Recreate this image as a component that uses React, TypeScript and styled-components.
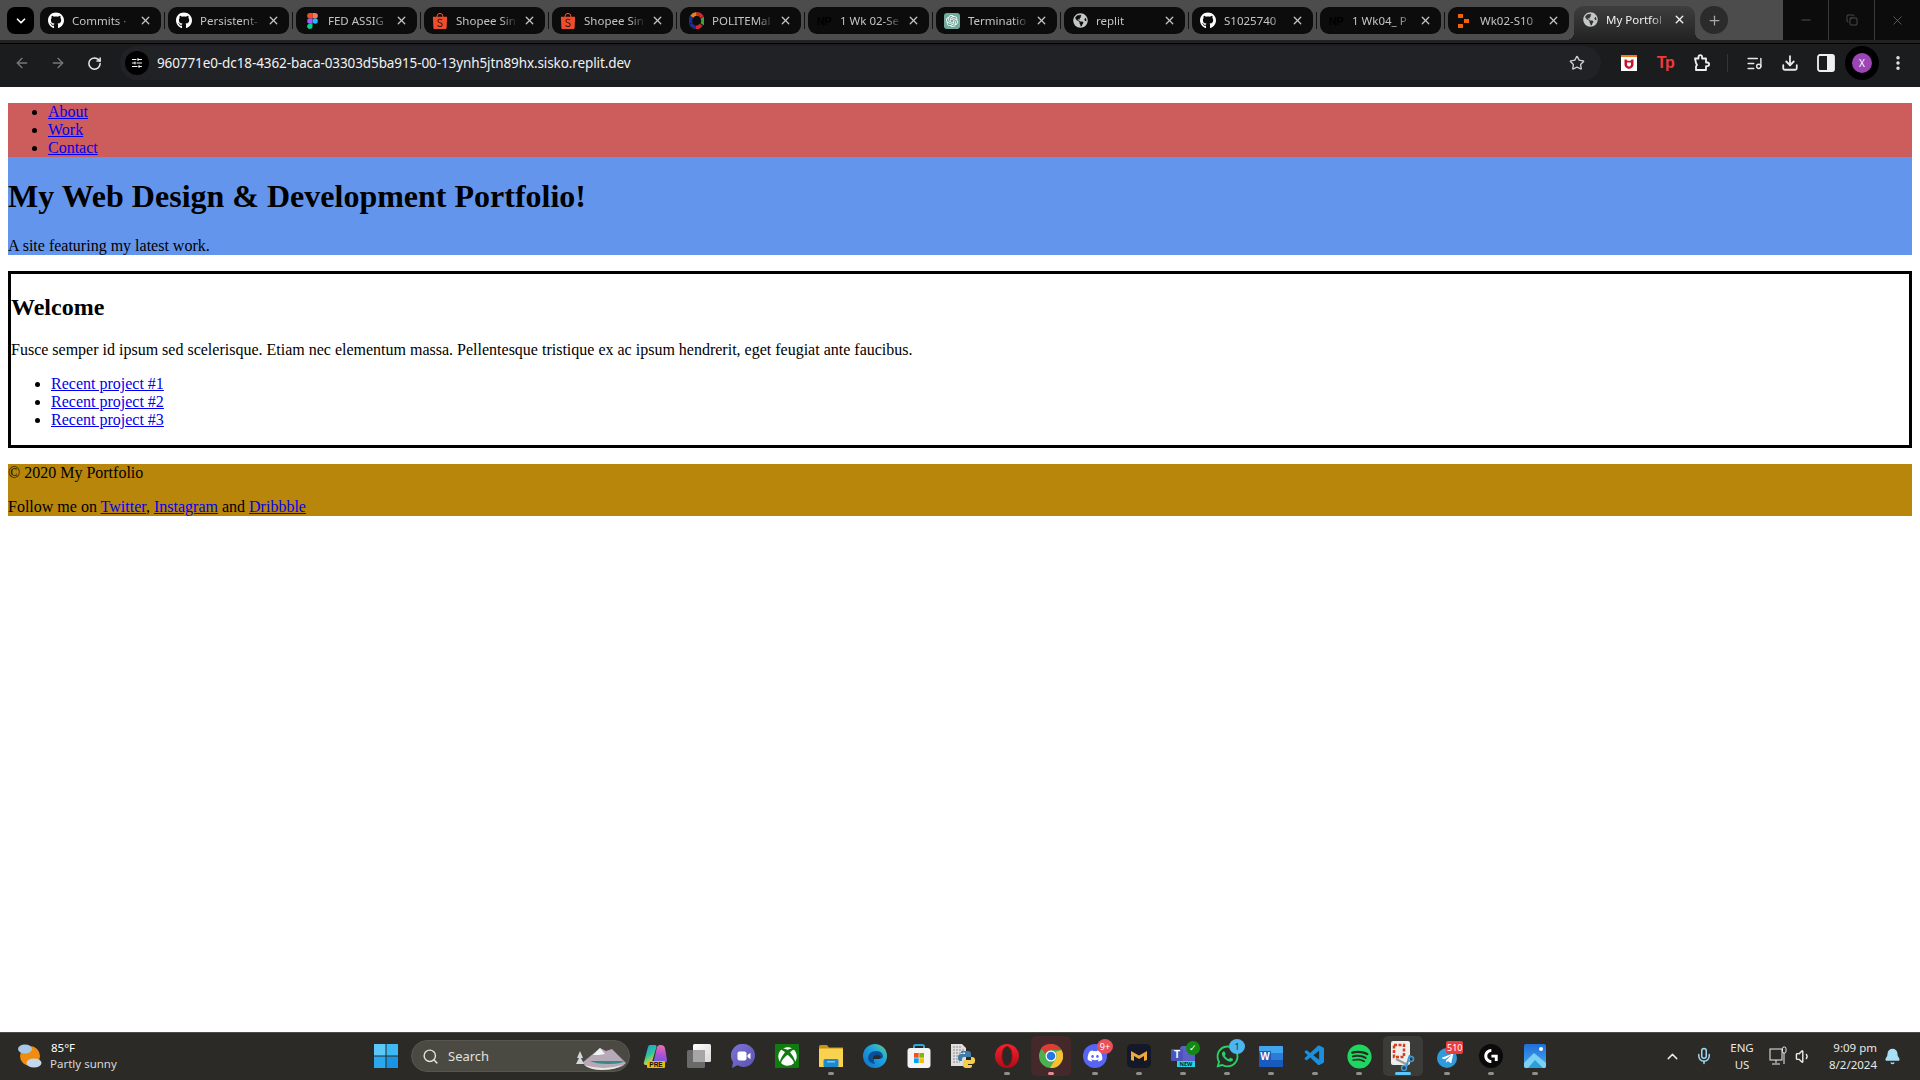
import React from "react";
import styled, { createGlobalStyle } from "styled-components";
import {
  ArrowLeft,
  ArrowRight,
  Bell,
  ChevronDown,
  ChevronUp,
  Copy,
  Download,
  EllipsisVertical,
  ListMusic,
  Mic,
  Minus,
  Plus,
  RotateCw,
  Search,
  SlidersHorizontal,
  Star,
  Volume1,
  X,
} from "lucide-react";
import {
  FaDiscord,
  FaGithub,
  FaGlobeAmericas,
  FaSpotify,
  FaTelegramPlane,
  FaWhatsapp,
  FaXbox,
} from "react-icons/fa";
import { SiLogitechg, SiOpenai, SiShopee } from "react-icons/si";
import { VscVscode } from "react-icons/vsc";

const GlobalStyle = createGlobalStyle`
  html, body {
    margin: 0;
    padding: 0;
    height: 100%;
    overflow: hidden;
  }
`;

const Screen = styled.div`
  height: 100vh;
  display: flex;
  flex-direction: column;
  background: #fff;
  overflow: hidden;
`;

/* browser chrome */
const TabStrip = styled.div`
  height: 40px;
  flex: none;
  display: flex;
  background: #4c4c4c;
  font-family: "Noto Sans", "Liberation Sans", sans-serif;
  border-bottom: 3px solid #222;
  box-sizing: content-box;
`;

const TabMenu = styled.div`
  width: 27px;
  height: 27px;
  margin: 7px 6px 0 7px;
  flex: none;
  border-radius: 8px;
  background: #000;
  color: #fff;
  display: flex;
  align-items: center;
  justify-content: center;
`;

const Tab = styled.div<{ $active?: boolean }>`
  position: relative;
  width: 121px;
  height: ${(p) => (p.$active ? "34px" : "27px")};
  margin-top: ${(p) => (p.$active ? "6px" : "7px")};
  flex: none;
  display: flex;
  align-items: center;
  padding: ${(p) => (p.$active ? "0 0 7px 8px" : "0 0 0 8px")};
  box-sizing: border-box;
  border-radius: ${(p) => (p.$active ? "9px 9px 0 0" : "9px")};
  background: ${(p) => (p.$active ? "linear-gradient(#3e3e3e, #232323)" : "#0c0c0c")};
  color: ${(p) => (p.$active ? "#f0f0f0" : "#c4c4c4")};
  ${(p) =>
    p.$active &&
    `
    &::before, &::after {
      content: "";
      position: absolute;
      bottom: 0;
      width: 8px;
      height: 8px;
    }
    &::before {
      left: -8px;
      background: radial-gradient(circle at 0 0, transparent 8px, #232323 8px);
    }
    &::after {
      right: -8px;
      background: radial-gradient(circle at 100% 0, transparent 8px, #232323 8px);
    }
  `}
`;

const TabSep = styled.div<{ $hidden?: boolean }>`
  width: 1px;
  height: 17px;
  margin: ${(p) => (p.$hidden ? "12px 2px 0" : "12px 3px 0")};
  flex: none;
  background: ${(p) => (p.$hidden ? "transparent" : "#111")};
`;

const Fav = styled.span`
  width: 16px;
  height: 16px;
  flex: none;
  display: flex;
  align-items: center;
  justify-content: center;
`;

const TabTitle = styled.span`
  width: 63px;
  margin-left: 8px;
  font-size: 11.5px;
  white-space: nowrap;
  overflow: hidden;
  mask-image: linear-gradient(90deg, #000 72%, transparent 98%);
`;

const TabClose = styled.span`
  display: flex;
  margin-left: 4px;
`;

const NewTab = styled.div`
  width: 28px;
  height: 28px;
  margin: 6px 0 0 5px;
  flex: none;
  border-radius: 50%;
  background: #2b2b2b;
  color: #a8a8a8;
  display: flex;
  align-items: center;
  justify-content: center;
`;

const WindowControls = styled.div`
  margin-left: auto;
  width: 137px;
  display: flex;
  background: #0c0c0c;
`;

const WindowButton = styled.div`
  flex: 1;
  display: flex;
  align-items: center;
  justify-content: center;
  color: #858585;
  & + & {
    border-left: 1px solid #3a3a3a;
  }
`;

const Toolbar = styled.div`
  height: 44px;
  flex: none;
  display: flex;
  align-items: flex-start;
  box-sizing: border-box;
  padding: 2px 4px 0;
  border-top: 1px solid #000;
  background: #1b1c1e;
  color: #e4e4e4;
`;

const ToolButton = styled.div<{ $dim?: boolean }>`
  width: 36px;
  height: 34px;
  flex: none;
  display: flex;
  align-items: center;
  justify-content: center;
  color: ${(p) => (p.$dim ? "#76777a" : "#e8e8e8")};
`;

const Omnibox = styled.div`
  flex: 1;
  height: 34px;
  margin: 0 10px 0 8px;
  display: flex;
  align-items: center;
  padding: 0 16px 0 5px;
  border-radius: 17px;
  background: #212226;
`;

const SiteInfo = styled.span`
  width: 24px;
  height: 24px;
  border-radius: 50%;
  background: #000;
  color: #fff;
  display: flex;
  align-items: center;
  justify-content: center;
`;

const Url = styled.span`
  flex: 1;
  margin-left: 8px;
  color: #f2f2f2;
  font-family: "Noto Sans", "Liberation Sans", sans-serif;
  font-size: 13.5px;
  letter-spacing: -0.1px;
  white-space: nowrap;
`;

const ToolDivider = styled.div`
  width: 1px;
  height: 18px;
  margin: 8px 8px 0;
  flex: none;
  background: #333437;
`;

const AvatarRing = styled.div`
  width: 34px;
  height: 34px;
  border-radius: 50%;
  background: #000;
  display: flex;
  align-items: center;
  justify-content: center;
`;

const AvatarDot = styled.div`
  width: 20px;
  height: 20px;
  border-radius: 50%;
  background: #9c45b5;
  color: #fff;
  font-family: "Noto Sans", sans-serif;
  font-size: 10px;
  display: flex;
  align-items: center;
  justify-content: center;
`;

const ExtBadge = styled.span`
  color: #ef3a3a;
  font-family: "Liberation Sans", sans-serif;
  font-size: 16px;
  font-weight: 700;
  letter-spacing: -1.5px;
`;

/* the page itself */
const Page = styled.div`
  flex: 1;
  min-height: 0;
  padding: 16px 8px 0;
  font-family: "Liberation Serif", "Times New Roman", serif;
  font-size: 16px;
  color: #000;
  background: #fff;
  overflow: hidden;
  a {
    color: #00e;
  }
  p {
    margin: 16px 0;
  }
`;

const NavBar = styled.nav`
  background: #cd5c5c;
`;

const PageList = styled.ul<{ $flush?: boolean }>`
  margin: ${(p) => (p.$flush ? "0" : "16px 0")};
  padding-left: 40px;
`;

const Hero = styled.header`
  display: flow-root;
  background: #6495ed;
  h1 {
    margin: 21.44px 0;
    font-size: 32px;
  }
  p {
    margin: 0;
  }
`;

const Welcome = styled.section`
  display: flow-root;
  margin: 16px 0;
  border: 3px solid #000;
  h2 {
    margin: 19.92px 0;
    font-size: 24px;
  }
`;

const PageFooter = styled.footer`
  display: flow-root;
  background: #b8860b;
  p:first-child {
    margin-top: 0;
  }
  p:last-child {
    margin-bottom: 0;
  }
`;

/* windows taskbar */
const Taskbar = styled.div`
  height: 48px;
  flex: none;
  display: flex;
  align-items: center;
  box-sizing: border-box;
  padding-bottom: 1px;
  border-top: 1px solid #4a4a46;
  background: #2b2a26;
  color: #fff;
  font-family: "Noto Sans", "Liberation Sans", sans-serif;
`;

const Weather = styled.div`
  width: 374px;
  flex: none;
  box-sizing: border-box;
  padding-left: 18px;
  display: flex;
  align-items: center;
  gap: 8px;
`;

const WeatherText = styled.div`
  font-size: 11.5px;
  line-height: 16px;
  color: #d9d9d6;
  b {
    display: block;
    margin-left: 1px;
    color: #fff;
    font-weight: 400;
  }
`;

const StartButton = styled.div`
  width: 24px;
  height: 24px;
  flex: none;
  margin-right: 13px;
`;

const SearchPill = styled.div`
  width: 219px;
  height: 32px;
  flex: none;
  margin-right: 3px;
  box-sizing: border-box;
  padding: 0 3px 0 10px;
  display: flex;
  align-items: center;
  gap: 9px;
  border-radius: 16px;
  background: #4a4942;
  border: 1px solid #565550;
  font-size: 13px;
  color: #e2e2dd;
  span {
    flex: 1;
  }
`;

const AppRow = styled.div`
  display: flex;
  flex: none;
`;

const AppCell = styled.div<{ $state?: "recent" | "focus" }>`
  position: relative;
  width: 44px;
  height: 40px;
  display: flex;
  align-items: center;
  justify-content: center;
  box-sizing: border-box;
  &::before {
    content: "";
    position: absolute;
    inset: 0 2px;
    border-radius: 5px;
    background: ${(p) =>
      p.$state === "recent" ? "#45292a" : p.$state === "focus" ? "#3b3b38" : "transparent"};
  }
  > * {
    position: relative;
  }
`;

const RunDot = styled.i<{ $color?: string; $wide?: boolean }>`
  position: absolute;
  left: 50%;
  bottom: 1px;
  width: ${(p) => (p.$wide ? "16px" : "6px")};
  height: 3px;
  margin-left: ${(p) => (p.$wide ? "-8px" : "-3px")};
  border-radius: 2px;
  background: ${(p) => p.$color || "#8f8f8c"};
`;

const CountBadge = styled.b<{ $bg: string; $square?: boolean; $ink?: string }>`
  position: absolute;
  top: ${(p) => (p.$square ? "5px" : "3px")};
  left: ${(p) => (p.$square ? "21px" : "24px")};
  min-width: 14px;
  height: ${(p) => (p.$square ? "13px" : "15px")};
  padding: 0 1px;
  border-radius: ${(p) => (p.$square ? "2px" : "50%")};
  background: ${(p) => p.$bg};
  color: ${(p) => p.$ink || "#fff"};
  font-size: 9px;
  font-weight: 400;
  line-height: ${(p) => (p.$square ? "13px" : "15px")};
  text-align: center;
`;

const Tray = styled.div`
  margin-left: auto;
  padding-right: 13px;
  display: flex;
  align-items: center;
  color: #e8e8e6;
`;

const TrayCell = styled.div<{ $w: number }>`
  width: ${(p) => p.$w}px;
  display: flex;
  align-items: center;
  justify-content: center;
`;

const Lang = styled.div`
  font-size: 11.5px;
  line-height: 17px;
  text-align: center;
`;

const Clock = styled.div`
  width: 64px;
  font-size: 11.5px;
  line-height: 17px;
  text-align: right;
  white-space: nowrap;
`;

/* small drawings */
const FigmaIcon = () => (
  <svg width="11" height="16" viewBox="0 0 12 18">
    <circle cx="9" cy="9" r="3" fill="#1abcfe" />
    <path d="M3 12h3v3a3 3 0 1 1-3-3z" fill="#0acf83" />
    <path d="M3 6h3v6H3a3 3 0 0 1 0-6z" fill="#a259ff" />
    <path d="M3 0h3v6H3a3 3 0 0 1 0-6z" fill="#f24e1e" />
    <path d="M6 0h3a3 3 0 0 1 0 6H6z" fill="#ff7262" />
  </svg>
);

const PoliteIcon = () => (
  <svg width="15" height="17" viewBox="0 0 16 18" fill="none" strokeWidth="4">
    <path d="M8 2a7 7 0 0 1 6 3.5" stroke="#d9232e" />
    <path d="M14 6a7 7 0 0 1 0 7" stroke="#3aa537" />
    <path d="M13 13.500a7 7 0 0 1-6 3" stroke="#d9232e" />
    <path d="M7 16.500a7 7 0 0 1-5-4" stroke="#1b2f8f" />
    <path d="M2 12a7 7 0 0 1 1-7" stroke="#1b2f8f" />
    <path d="M3 5a7 7 0 0 1 5-3" stroke="#e8801a" />
  </svg>
);

const NpMark = styled.span`
  color: #000;
  font-family: "Liberation Sans", sans-serif;
  font-size: 11px;
  font-weight: 700;
  letter-spacing: -0.5px;
`;

const GptTile = styled.span`
  width: 16px;
  height: 16px;
  border-radius: 3px;
  background: #74aa9c;
  color: #fff;
  display: flex;
  align-items: center;
  justify-content: center;
`;

const BlocksIcon = () => (
  <svg width="12" height="14" viewBox="0 0 12 14" fill="#f26207">
    <rect x="0" y="0" width="5" height="4" />
    <rect x="6" y="5" width="5" height="4" />
    <rect x="0" y="10" width="5" height="4" />
  </svg>
);

const OptIcon = () => (
  <svg width="16" height="16" viewBox="0 0 16 16">
    <rect width="16" height="16" fill="#fff" />
    <rect width="16" height="2" fill="#f0781e" />
    <path d="M3.500 4.500h2l1 1.200h3l1-1.200h2v5q0 3-4.500 4.500-4.500-1.500-4.500-4.500z" fill="#c8142e" />
    <path d="M6 7.500h4v2q0 1.500-2 2.200-2-.7-2-2.200z" fill="#fff" />
  </svg>
);

const PuzzleIcon = () => (
  <svg width="18" height="18" viewBox="0 0 18 18" fill="none" stroke="#f0f0f0" strokeWidth="1.800">
    <path
      d="M3 4.500h3.500V3a1.800 1.800 0 0 1 3.600 0v1.500H14v4h1.300a1.800 1.800 0 0 1 0 3.600H14V16H4v-3.500l1-1.500-1-2z"
      strokeLinejoin="round"
    />
  </svg>
);

const PanelIcon = () => (
  <svg width="18" height="18" viewBox="0 0 18 18">
    <rect x="1" y="1" width="16" height="16" rx="2" fill="none" stroke="#f0f0f0" strokeWidth="1.800" />
    <rect x="10" y="1" width="7" height="16" fill="#f0f0f0" />
  </svg>
);

const WeatherIcon = () => (
  <svg width="24" height="28" viewBox="0 0 24 28">
    <circle cx="12" cy="14" r="10" fill="#f08c10" />
    <ellipse cx="7" cy="7" rx="7" ry="4.500" fill="#a8c8e8" />
    <ellipse cx="16" cy="21" rx="7.500" ry="4.500" fill="#c4d8ec" />
  </svg>
);

const StartIcon = () => (
  <svg width="24" height="24" viewBox="0 0 24 24">
    <rect x="0" y="0" width="11.500" height="11.500" fill="#5cc8fa" />
    <rect x="12.500" y="0" width="11.500" height="11.500" fill="#3db8f5" />
    <rect x="0" y="12.500" width="11.500" height="11.500" fill="#28a8ee" />
    <rect x="12.500" y="12.500" width="11.500" height="11.500" fill="#1a94e2" />
  </svg>
);

const SearchArt = () => (
  <svg width="50" height="30" viewBox="0 0 50 30">
    <path d="M6 22L24 7l6 3 6-2 14 14q-4 6-20 6-18 0-24-6z" fill="#b7a9b5" />
    <path d="M24 7l5 6-6 1-6 0z" fill="#f0f2f6" />
    <path d="M14 20h34q-2 3-16 3-12 0-18-3z" fill="#2f8c8a" />
    <path d="M8 24q20 6 38 0-6 5-20 5-12 0-18-5z" fill="#e8e8e4" />
    <path d="M4 10l3 7h-2l3 6H0l3-6H1z" fill="#cfd8dc" />
  </svg>
);

const CopilotIcon = () => (
  <svg width="24" height="22" viewBox="0 0 24 22">
    <defs>
      <linearGradient id="copA" x1="0" y1="0" x2="0.4" y2="1">
        <stop offset="0" stopColor="#1f9ae8" />
        <stop offset="0.55" stopColor="#2fc29a" />
        <stop offset="1" stopColor="#f0d23c" />
      </linearGradient>
      <linearGradient id="copB" x1="0.6" y1="0" x2="0.5" y2="1">
        <stop offset="0" stopColor="#e870b0" />
        <stop offset="0.5" stopColor="#a84fd8" />
        <stop offset="1" stopColor="#3d6fe0" />
      </linearGradient>
    </defs>
    <path d="M7 0h5q2 0 1.500 2L9 17q-1 3-4 3H3q-3 0-2-3L5 2q.5-2 2-2z" fill="url(#copA)" />
    <path d="M14 2q1-2 3-2h1q3 0 4 3l2 12q0 3-3 3l-9 3q-3 0-2-2z" fill="url(#copB)" />
  </svg>
);

const PreTag = styled.span`
  position: absolute;
  left: 14px;
  top: 25px;
  width: 18px;
  height: 7px;
  border-radius: 1px;
  background: #f5b800;
  color: #111;
  font-family: "Liberation Sans", sans-serif;
  font-size: 6.500px;
  font-weight: 700;
  line-height: 7px;
  text-align: center;
`;

const TaskViewIcon = () => (
  <svg width="24" height="24" viewBox="0 0 24 24">
    <defs>
      <linearGradient id="taskTop" x1="0" y1="0" x2="1" y2="1">
        <stop offset="0" stopColor="#fff" />
        <stop offset="1" stopColor="#d8d8d8" />
      </linearGradient>
    </defs>
    <rect x="6" y="0" width="18" height="18" rx="1.500" fill="url(#taskTop)" />
    <rect x="0" y="6" width="18" height="18" rx="1.500" fill="#6a6a6a" />
    <rect x="6" y="6" width="12" height="12" fill="#a6a6a6" />
  </svg>
);

const MeetIcon = () => (
  <svg width="24" height="24" viewBox="0 0 24 24">
    <defs>
      <linearGradient id="meetBg" x1="0" y1="0" x2="1" y2="1">
        <stop offset="0" stopColor="#7d74d8" />
        <stop offset="1" stopColor="#5a52b0" />
      </linearGradient>
    </defs>
    <path d="M12.500 0a11.500 11.500 0 1 1-6 21.300L1 24l1-6A11.500 11.500 0 0 1 12.500 0z" fill="url(#meetBg)" />
    <rect x="6.500" y="7.500" width="9" height="9" rx="2" fill="#fff" />
    <path d="M16.500 11l3-2.200v6.400l-3-2.200z" fill="#fff" />
  </svg>
);

const XboxTile = styled.span`
  width: 24px;
  height: 24px;
  border-radius: 1px;
  background: #107c10;
  color: #fff;
  display: flex;
  align-items: center;
  justify-content: center;
`;

const FolderIcon = () => (
  <svg width="24" height="22" viewBox="0 0 24 22">
    <path d="M0 1.500q0-1.500 1.500-1.500H8l2 2.500h14V22H0z" fill="#c9920f" />
    <rect x="0" y="3.500" width="24" height="18.500" rx="1" fill="#f9d250" />
    <rect x="4.500" y="14" width="15" height="8" rx="1.500" fill="#1d8ad0" />
    <rect x="8" y="16" width="8" height="1.500" fill="#7cc6ee" />
  </svg>
);

const EdgeIcon = () => (
  <svg width="24" height="24" viewBox="0 0 24 24">
    <defs>
      <linearGradient id="edgeBg" x1="0" y1="1" x2="1" y2="0">
        <stop offset="0" stopColor="#0f6fc4" />
        <stop offset="0.6" stopColor="#1fa4e0" />
        <stop offset="1" stopColor="#5fd37e" />
      </linearGradient>
    </defs>
    <circle cx="12" cy="12" r="12" fill="url(#edgeBg)" />
    <path d="M5 14q1-7 8-7 6 0 7 5 0 3-4 3h-5q-1 2 1 5-7-1-7-6z" fill="#0b4f9a" />
    <path d="M10 15q0-4 4-4 3 0 4 2-1 2-3 2z" fill="#2b2a26" />
  </svg>
);

const StoreIcon = () => (
  <svg width="24" height="24" viewBox="0 0 24 24">
    <path d="M7 6V2.500Q7 1 8.500 1h7Q17 1 17 2.500V6" fill="none" stroke="#28a8e0" strokeWidth="2" />
    <rect x="0.500" y="4" width="23" height="20" rx="3" fill="#f4f4f4" />
    <rect x="7" y="9" width="4.700" height="4.700" fill="#f25022" />
    <rect x="12.300" y="9" width="4.700" height="4.700" fill="#7fba00" />
    <rect x="7" y="14.300" width="4.700" height="4.700" fill="#00a4ef" />
    <rect x="12.300" y="14.300" width="4.700" height="4.700" fill="#ffb900" />
  </svg>
);

const PythonFileIcon = () => (
  <svg width="24" height="24" viewBox="0 0 24 24">
    <path d="M0 0h11l4 4v18H0z" fill="#dedede" />
    <path
      d="M2 3h8M2 6h11M2 9h11M2 12h8M2 15h7M2 18h7"
      stroke="#8a8a8a"
      strokeWidth="1"
      strokeDasharray="2 1"
    />
    <path d="M11 7h6q3 0 3 3v3h-7q-2 0-2 2v2H9q-2 0-2-3v-1q0-3 3-3h4V9h-4V8q0-1 1-1z" fill="#3f7cac" />
    <path d="M20 13h1q3 0 3 3v1q0 3-3 3h-4v1h4v1q0 2-2 2h-4q-3 0-3-3v-3q0-2 2-2h6z" fill="#f5cf4a" />
    <circle cx="13" cy="9" r="0.800" fill="#fff" />
  </svg>
);

const OperaIcon = () => (
  <svg width="24" height="24" viewBox="0 0 24 24">
    <defs>
      <linearGradient id="operaBg" x1="0" y1="0" x2="0" y2="1">
        <stop offset="0" stopColor="#f5222d" />
        <stop offset="1" stopColor="#b00c18" />
      </linearGradient>
    </defs>
    <circle cx="12" cy="12" r="12" fill="url(#operaBg)" />
    <ellipse cx="12" cy="12" rx="5" ry="9.500" fill="#2b2a26" />
    <ellipse cx="12" cy="12" rx="5" ry="9.500" fill="none" stroke="#80101a" strokeWidth="0.800" />
  </svg>
);

const ChromeIcon = () => (
  <svg width="24" height="24" viewBox="0 0 24 24">
    <circle cx="12" cy="12" r="12" fill="#4caf50" />
    <path d="M12 0a12 12 0 0 1 10.400 6H12a6 6 0 0 0-5.600 3.800L2 4.300A12 12 0 0 1 12 0z" fill="#e53935" />
    <path d="M22.400 6A12 12 0 0 1 11 24l5.200-8.200A6 6 0 0 0 16.500 8z" fill="#fbc02d" />
    <circle cx="12" cy="12" r="5.500" fill="#fff" />
    <circle cx="12" cy="12" r="4.300" fill="#2a75e0" />
  </svg>
);

const DiscordDisc = styled.span`
  width: 24px;
  height: 24px;
  border-radius: 50%;
  background: #5865f2;
  color: #fff;
  display: flex;
  align-items: center;
  justify-content: center;
`;

const GamingIcon = () => (
  <svg width="24" height="24" viewBox="0 0 24 24">
    <rect width="24" height="24" rx="5" fill="#141828" />
    <path d="M4 7l8 4.500L20 7v9l-3 1v-5l-5 3-5-3v5l-3-1z" fill="#f0a838" />
  </svg>
);

const TeamsTile = styled.span`
  position: relative;
  width: 24px;
  height: 24px;
  &::before {
    content: "";
    position: absolute;
    left: 9px;
    top: 2px;
    width: 15px;
    height: 16px;
    border-radius: 3px 3px 0 0;
    background: #5b60c8;
  }
`;

const TeamsT = styled.span`
  position: absolute;
  left: 0;
  top: 5px;
  width: 12px;
  height: 12px;
  border-radius: 1px;
  background: #4b53bc;
  color: #fff;
  font-family: "Liberation Sans", sans-serif;
  font-size: 10px;
  font-weight: 700;
  line-height: 12px;
  text-align: center;
`;

const NewTag = styled.span`
  position: absolute;
  left: 6px;
  top: 17px;
  width: 18px;
  height: 6px;
  background: #29d3e0;
  color: #072a30;
  font-size: 5.500px;
  font-weight: 700;
  line-height: 6px;
  text-align: center;
`;

const CheckDot = styled.span`
  position: absolute;
  left: 15px;
  top: -3px;
  width: 14px;
  height: 14px;
  border-radius: 50%;
  background: #108a10;
  color: #fff;
  font-size: 9px;
  line-height: 14px;
  text-align: center;
`;

const WordTile = styled.span`
  position: relative;
  width: 24px;
  height: 21px;
  border-radius: 1px;
  background: linear-gradient(#41a5ee 33%, #2b7cd3 33% 66%, #185abd 66%);
  &::after {
    content: "W";
    position: absolute;
    left: 0;
    top: 5px;
    width: 12px;
    height: 12px;
    background: #185abd;
    color: #fff;
    font-family: "Liberation Sans", sans-serif;
    font-size: 10px;
    font-weight: 700;
    line-height: 12px;
    text-align: center;
  }
`;

const SnipIcon = () => (
  <svg width="26" height="30" viewBox="0 0 26 30">
    <rect x="1" y="0" width="19" height="24" rx="2" fill="#eeeeee" />
    <rect x="4" y="4" width="10" height="12" fill="none" stroke="#d5401a" strokeWidth="2.500" strokeDasharray="3 1.500" />
    <path d="M6 18l12 6" stroke="#9a9a9a" strokeWidth="2" />
    <path d="M20 14l-4 12" stroke="#3a9ad9" strokeWidth="2" />
    <circle cx="21" cy="18" r="2.500" fill="none" stroke="#3a9ad9" strokeWidth="1.500" />
    <circle cx="14" cy="27" r="2.500" fill="none" stroke="#3a9ad9" strokeWidth="1.500" />
  </svg>
);

const TelegramDisc = styled.span`
  width: 20px;
  height: 20px;
  margin-top: 4px;
  border-radius: 50%;
  background: #2f9bdc;
  color: #fff;
  display: flex;
  align-items: center;
  justify-content: center;
`;

const LogiDisc = styled.span`
  width: 24px;
  height: 24px;
  border-radius: 50%;
  background: #0a0a0a;
  color: #fff;
  display: flex;
  align-items: center;
  justify-content: center;
`;

const PhotosIcon = () => (
  <svg width="22" height="24" viewBox="0 0 22 24">
    <defs>
      <linearGradient id="photoBg" x1="0" y1="0" x2="0" y2="1">
        <stop offset="0" stopColor="#1f6fd8" />
        <stop offset="1" stopColor="#4aa8f0" />
      </linearGradient>
    </defs>
    <rect width="22" height="24" rx="2" fill="url(#photoBg)" />
    <path d="M0 19l10-10 12 10v3q0 2-2 2H2q-2 0-2-2z" fill="#7cd0f4" />
    <path d="M4 24l7-8 8 8z" fill="#2aa0d8" />
    <circle cx="17" cy="5" r="2" fill="#fff" />
  </svg>
);

const NetworkIcon = () => (
  <svg width="20" height="20" viewBox="0 0 20 20" fill="none" stroke="#ececec" strokeWidth="1">
    <rect x="1" y="3" width="12" height="11" />
    <path d="M7 14v3M3 18h8" />
    <rect x="13.500" y="1" width="3.500" height="6" rx="1.500" />
    <path d="M15 7v11" />
  </svg>
);

const tabs = [
  { title: "Commits ·", icon: <FaGithub size={17} color="#fff" /> },
  { title: "Persistent-", icon: <FaGithub size={17} color="#fff" /> },
  { title: "FED ASSIG", icon: <FigmaIcon /> },
  { title: "Shopee Sin", icon: <SiShopee size={16} color="#ee4d2d" /> },
  { title: "Shopee Sin", icon: <SiShopee size={16} color="#ee4d2d" /> },
  { title: "POLITEMal", icon: <PoliteIcon /> },
  { title: "1 Wk 02-Se", icon: <NpMark>NP</NpMark> },
  { title: "Terminatio", icon: <GptTile><SiOpenai size={12} /></GptTile> },
  { title: "replit", icon: <FaGlobeAmericas size={15} color="#c4c7c5" /> },
  { title: "S1025740", icon: <FaGithub size={17} color="#fff" /> },
  { title: "1 Wk04_ P", icon: <NpMark>NP</NpMark> },
  { title: "Wk02-S10", icon: <BlocksIcon /> },
];

const apps: {
  icon: React.ReactNode;
  dot?: boolean;
  state?: "recent" | "focus";
  badge?: React.ReactNode;
}[] = [
  { icon: <><CopilotIcon /><PreTag>PRE</PreTag></> },
  { icon: <TaskViewIcon /> },
  { icon: <MeetIcon /> },
  { icon: <XboxTile><FaXbox size={19} /></XboxTile> },
  { icon: <FolderIcon />, dot: true },
  { icon: <EdgeIcon /> },
  { icon: <StoreIcon /> },
  { icon: <PythonFileIcon /> },
  { icon: <OperaIcon />, dot: true },
  { icon: <ChromeIcon />, dot: true, state: "recent" },
  { icon: <DiscordDisc><FaDiscord size={16} /></DiscordDisc>, dot: true, badge: <CountBadge $bg="#e8505b">9+</CountBadge> },
  { icon: <GamingIcon />, dot: true },
  { icon: <TeamsTile><TeamsT>T</TeamsT><NewTag>NEW</NewTag><CheckDot>✓</CheckDot></TeamsTile>, dot: true },
  { icon: <FaWhatsapp size={25} color="#25d366" />, dot: true, badge: <CountBadge $bg="#4db5ef" $ink="#12303f">1</CountBadge> },
  { icon: <WordTile />, dot: true },
  { icon: <VscVscode size={24} color="#1a8fe0" />, dot: true },
  { icon: <FaSpotify size={25} color="#1ed760" />, dot: true },
  { icon: <SnipIcon />, state: "focus" },
  { icon: <TelegramDisc><FaTelegramPlane size={13} /></TelegramDisc>, dot: true, badge: <CountBadge $bg="#ee3b3b" $square>510</CountBadge> },
  { icon: <LogiDisc><SiLogitechg size={14} /></LogiDisc>, dot: true },
  { icon: <PhotosIcon />, dot: true },
];

function BrowserChrome() {
  return (
    <>
      <TabStrip>
        <TabMenu>
          <ChevronDown size={14} strokeWidth={3} />
        </TabMenu>
        {tabs.map((t, i) => (
          <React.Fragment key={i}>
            <Tab>
              <Fav>{t.icon}</Fav>
              <TabTitle>{t.title}</TabTitle>
              <TabClose>
                <X size={13} strokeWidth={2.4} />
              </TabClose>
            </Tab>
            <TabSep $hidden={i === tabs.length - 1} />
          </React.Fragment>
        ))}
        <Tab $active>
          <Fav>
            <FaGlobeAmericas size={15} color="#c4c7c5" />
          </Fav>
          <TabTitle>My Portfol</TabTitle>
          <TabClose>
            <X size={13} strokeWidth={2.6} />
          </TabClose>
        </Tab>
        <NewTab>
          <Plus size={15} />
        </NewTab>
        <WindowControls>
          <WindowButton>
            <Minus size={14} strokeWidth={1} />
          </WindowButton>
          <WindowButton>
            <Copy size={12} strokeWidth={1} />
          </WindowButton>
          <WindowButton>
            <X size={15} strokeWidth={1} />
          </WindowButton>
        </WindowControls>
      </TabStrip>
      <Toolbar>
        <ToolButton $dim>
          <ArrowLeft size={16} />
        </ToolButton>
        <ToolButton $dim>
          <ArrowRight size={16} />
        </ToolButton>
        <ToolButton>
          <RotateCw size={15} strokeWidth={2.4} />
        </ToolButton>
        <Omnibox>
          <SiteInfo>
            <SlidersHorizontal size={12} />
          </SiteInfo>
          <Url>960771e0-dc18-4362-baca-03303d5ba915-00-13ynh5jtn89hx.sisko.replit.dev</Url>
          <Star size={16} color="#d0d0d0" strokeWidth={2} />
        </Omnibox>
        <ToolButton>
          <OptIcon />
        </ToolButton>
        <ToolButton>
          <ExtBadge>Tp</ExtBadge>
        </ToolButton>
        <ToolButton>
          <PuzzleIcon />
        </ToolButton>
        <ToolDivider />
        <ToolButton>
          <ListMusic size={17} />
        </ToolButton>
        <ToolButton>
          <Download size={18} strokeWidth={2.4} />
        </ToolButton>
        <ToolButton>
          <PanelIcon />
        </ToolButton>
        <ToolButton>
          <AvatarRing>
            <AvatarDot>X</AvatarDot>
          </AvatarRing>
        </ToolButton>
        <ToolButton>
          <EllipsisVertical size={18} strokeWidth={2.6} />
        </ToolButton>
      </Toolbar>
    </>
  );
}

function PortfolioPage() {
  return (
    <Page>
      <NavBar>
        <PageList $flush>
          <li><a href="#about">About</a></li>
          <li><a href="#work">Work</a></li>
          <li><a href="#contact">Contact</a></li>
        </PageList>
      </NavBar>
      <Hero>
        <h1>My Web Design &amp; Development Portfolio!</h1>
        <p>A site featuring my latest work.</p>
      </Hero>
      <Welcome>
        <h2>Welcome</h2>
        <p>
          Fusce semper id ipsum sed scelerisque. Etiam nec elementum massa. Pellentesque tristique ex ac ipsum
          hendrerit, eget feugiat ante faucibus.
        </p>
        <PageList>
          <li><a href="#p1">Recent project #1</a></li>
          <li><a href="#p2">Recent project #2</a></li>
          <li><a href="#p3">Recent project #3</a></li>
        </PageList>
      </Welcome>
      <PageFooter>
        <p>© 2020 My Portfolio</p>
        <p>
          Follow me on <a href="#t">Twitter</a>, <a href="#i">Instagram</a> and <a href="#d">Dribbble</a>
        </p>
      </PageFooter>
    </Page>
  );
}

function WindowsTaskbar() {
  return (
    <Taskbar>
      <Weather>
        <WeatherIcon />
        <WeatherText>
          <b>85°F</b>
          Partly sunny
        </WeatherText>
      </Weather>
      <StartButton>
        <StartIcon />
      </StartButton>
      <SearchPill>
        <Search size={17} />
        <span>Search</span>
        <SearchArt />
      </SearchPill>
      <AppRow>
        {apps.map((a, i) => (
          <AppCell key={i} $state={a.state}>
            {a.icon}
            {a.badge}
            {a.dot && !a.state && <RunDot />}
            {a.state === "recent" && <RunDot $color="#e88a94" />}
            {a.state === "focus" && <RunDot $wide $color="#5cc8fa" />}
          </AppCell>
        ))}
      </AppRow>
      <Tray>
        <TrayCell $w={32}>
          <ChevronUp size={17} />
        </TrayCell>
        <TrayCell $w={32}>
          <Mic size={18} color="#9fd8f0" />
        </TrayCell>
        <TrayCell $w={44}>
          <Lang>
            ENG
            <br />
            US
          </Lang>
        </TrayCell>
        <TrayCell $w={29}>
          <NetworkIcon />
        </TrayCell>
        <TrayCell $w={20}>
          <Volume1 size={17} />
        </TrayCell>
        <Clock>
          9:09 pm
          <br />
          8/2/2024
        </Clock>
        <TrayCell $w={30}>
          <Bell size={17} color="#a8e0f8" fill="#a8e0f8" />
        </TrayCell>
      </Tray>
    </Taskbar>
  );
}

export default function App() {
  return (
    <Screen>
      <GlobalStyle />
      <BrowserChrome />
      <PortfolioPage />
      <WindowsTaskbar />
    </Screen>
  );
}
